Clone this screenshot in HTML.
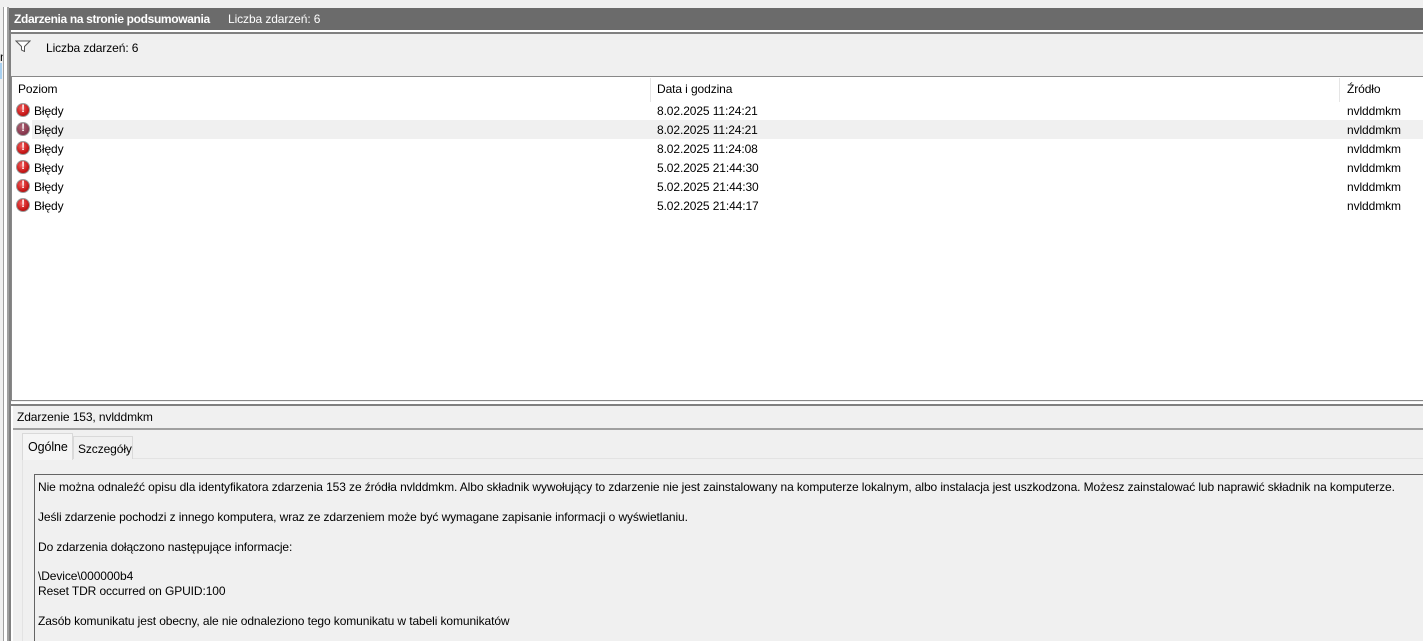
<!DOCTYPE html>
<html><head><meta charset="utf-8"><style>
*{margin:0;padding:0;box-sizing:border-box}
body{width:1423px;height:641px;overflow:hidden;background:#f0f0f0;font-family:"Liberation Sans",Arial,sans-serif;font-size:12px;color:#000;position:relative;letter-spacing:-0.1px}
.a{position:absolute;white-space:nowrap}
.ic{position:absolute;width:14px;height:14px;border-radius:50%;background:radial-gradient(circle at 40% 35%,#f26060,#c81818 60%,#8a1010);border:1px solid #9a9a9a}
.ic::after{content:"!";position:absolute;left:0;right:0;top:-1px;text-align:center;color:#fff;font-weight:bold;font-size:11px}
.ic.s{background:radial-gradient(circle at 40% 35%,#b06878,#8a3a50 60%,#6a2038)}
</style></head><body>
<div class="a" style="left:0;top:0;width:1423px;height:7px;background:#f0f0f0"></div>
<div class="a" style="left:3px;top:7px;width:1px;height:634px;background:#a0a0a0"></div>
<div class="a" style="left:4px;top:7px;width:3px;height:634px;background:#fff"></div>
<div class="a" style="left:0;top:50px;font-size:12px;color:#000;width:3px;overflow:hidden">n</div>
<div class="a" style="left:0;top:63px;width:2px;height:16px;background:#a8d0f0"></div>
<div class="a" style="left:7px;top:7px;width:2px;height:634px;background:#a0a0a0"></div>
<div class="a" style="left:9px;top:8px;width:1414px;height:22px;background:#6b6b6b"></div>
<div class="a" style="left:14px;top:12px;color:#fff;font-weight:bold;letter-spacing:-0.35px">Zdarzenia na stronie podsumowania</div>
<div class="a" style="left:228px;top:12px;color:#fff">Liczba zdarzeń: 6</div>
<div class="a" style="left:9px;top:30px;width:1414px;height:2px;background:#fff"></div>
<div class="a" style="left:9px;top:32px;width:1414px;height:2px;background:#808080"></div>
<div class="a" style="left:9px;top:30px;width:2px;height:611px;background:#808080"></div>
<svg class="a" style="left:15px;top:40px" width="16" height="12" viewBox="0 0 16 12"><path d="M1 1H15L9.5 6.5V11.5L6.5 10V6.5Z" fill="#fff" stroke="#555" stroke-width="1"/></svg>
<div class="a" style="left:46px;top:41px">Liczba zdarzeń: 6</div>
<div class="a" style="left:11px;top:76px;width:1412px;height:325px;background:#fff;border-top:1px solid #888;border-left:1px solid #888;border-bottom:1px solid #888"></div>
<div class="a" style="left:18px;top:82px">Poziom</div>
<div class="a" style="left:650px;top:78px;width:1px;height:24px;background:#e5e5e5"></div>
<div class="a" style="left:657px;top:82px">Data i godzina</div>
<div class="a" style="left:1339px;top:78px;width:1px;height:24px;background:#e5e5e5"></div>
<div class="a" style="left:1347px;top:82px">Źródło</div>
<div class="a" style="left:32px;top:120px;width:1391px;height:19px;background:#f0f0f0"></div>
<div class="ic" style="left:16px;top:103px"></div><div class="a" style="left:34px;top:104px">Błędy</div><div class="a" style="left:657px;top:104px">8.02.2025 11:24:21</div><div class="a" style="left:1347px;top:104px">nvlddmkm</div>
<div class="ic s" style="left:16px;top:122px"></div><div class="a" style="left:34px;top:123px">Błędy</div><div class="a" style="left:657px;top:123px">8.02.2025 11:24:21</div><div class="a" style="left:1347px;top:123px">nvlddmkm</div>
<div class="ic" style="left:16px;top:141px"></div><div class="a" style="left:34px;top:142px">Błędy</div><div class="a" style="left:657px;top:142px">8.02.2025 11:24:08</div><div class="a" style="left:1347px;top:142px">nvlddmkm</div>
<div class="ic" style="left:16px;top:160px"></div><div class="a" style="left:34px;top:161px">Błędy</div><div class="a" style="left:657px;top:161px">5.02.2025 21:44:30</div><div class="a" style="left:1347px;top:161px">nvlddmkm</div>
<div class="ic" style="left:16px;top:179px"></div><div class="a" style="left:34px;top:180px">Błędy</div><div class="a" style="left:657px;top:180px">5.02.2025 21:44:30</div><div class="a" style="left:1347px;top:180px">nvlddmkm</div>
<div class="ic" style="left:16px;top:198px"></div><div class="a" style="left:34px;top:199px">Błędy</div><div class="a" style="left:657px;top:199px">5.02.2025 21:44:17</div><div class="a" style="left:1347px;top:199px">nvlddmkm</div>
<div class="a" style="left:11px;top:402px;width:1412px;height:2px;background:#fff"></div>
<div class="a" style="left:11px;top:404px;width:1412px;height:2px;background:#808080"></div>
<div class="a" style="left:11px;top:406px;width:2px;height:235px;background:#fff"></div>
<div class="a" style="left:17px;top:410px">Zdarzenie 153, nvlddmkm</div>
<div class="a" style="left:13px;top:428px;width:1410px;height:2px;background:#a0a0a0"></div>
<div class="a" style="left:22px;top:458px;width:1401px;height:183px;background:#f0f0f0;border-top:1px solid #e3e3e3;border-left:1px solid #e3e3e3"></div>
<div class="a" style="left:73px;top:436px;width:60px;height:23px;background:#f0f0f0;border:1px solid #d9d9d9;border-bottom:none"></div>
<div class="a" style="left:78px;top:442px">Szczegóły</div>
<div class="a" style="left:22px;top:433px;width:51px;height:27px;background:#f5f5f5;border:1px solid #d9d9d9;border-bottom:none"></div>
<div class="a" style="left:28px;top:440px;font-size:12.5px">Ogólne</div>
<div class="a" style="left:34px;top:474px;width:1389px;height:167px;border:1px solid #646464;border-right:none;border-bottom:none;background:#f0f0f0"></div>
<div class="a" style="left:38px;top:480px;line-height:14px">Nie można odnaleźć opisu dla identyfikatora zdarzenia 153 ze źródła nvlddmkm. Albo składnik wywołujący to zdarzenie nie jest zainstalowany na komputerze lokalnym, albo instalacja jest uszkodzona. Możesz zainstalować lub naprawić składnik na komputerze.</div>
<div class="a" style="left:38px;top:510px">Jeśli zdarzenie pochodzi z innego komputera, wraz ze zdarzeniem może być wymagane zapisanie informacji o wyświetlaniu.</div>
<div class="a" style="left:38px;top:540px">Do zdarzenia dołączono następujące informacje:</div>
<div class="a" style="left:38px;top:569px">\Device\000000b4</div>
<div class="a" style="left:38px;top:584px">Reset TDR occurred on GPUID:100</div>
<div class="a" style="left:38px;top:614px">Zasób komunikatu jest obecny, ale nie odnaleziono tego komunikatu w tabeli komunikatów</div>
</body></html>
